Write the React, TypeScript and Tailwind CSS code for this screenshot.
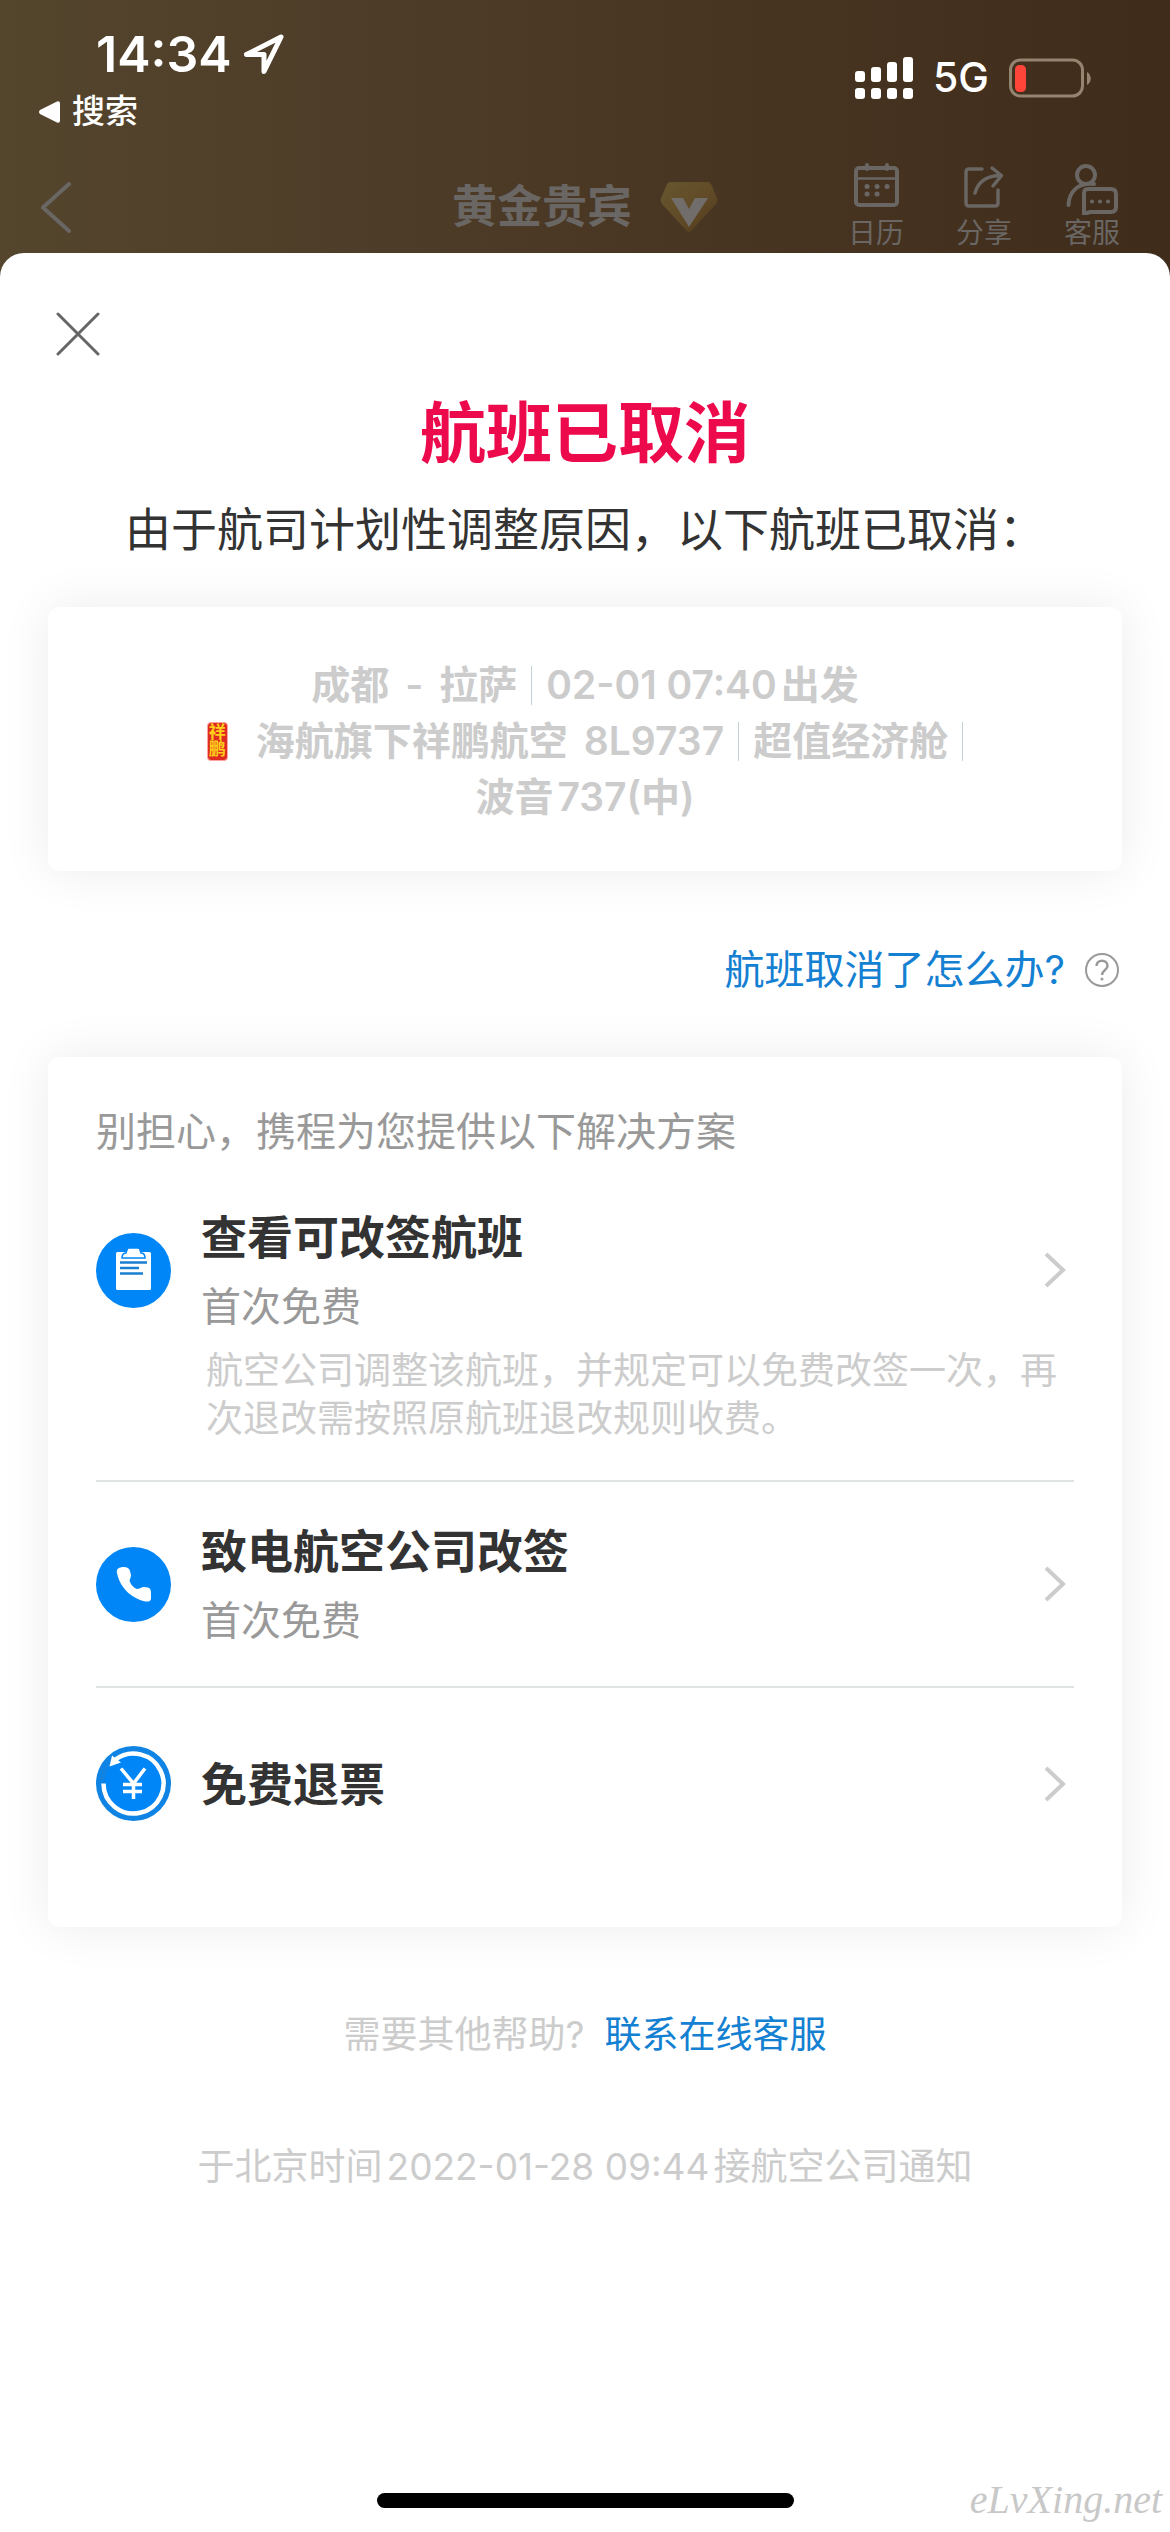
import type { ReactNode } from "react";

function LocationArrow() {
  return (
    <svg className="h-10 w-10" viewBox="0 0 40 40" fill="none" stroke="white" strokeWidth="5" strokeLinejoin="round" aria-hidden="true">
      <path d="M37 3 2.500 20.500H20V37.500Z" />
    </svg>
  );
}

function Signal() {
  const bars = [
    { x: 0, y: 14 },
    { x: 16, y: 10 },
    { x: 32, y: 5 },
    { x: 48, y: 0 },
  ];
  return (
    <svg className="h-[42px] w-[58px]" viewBox="0 0 58 42" fill="white" aria-label="信号">
      {bars.map((b) => (
        <g key={b.x}>
          <rect x={b.x} y={b.y} width="10" height={25 - b.y} rx="3" />
          <rect x={b.x} y="31" width="10" height="11" rx="3" />
        </g>
      ))}
    </svg>
  );
}

function Battery() {
  return (
    <svg className="h-10 w-[82px]" viewBox="0 0 82 40" fill="none" aria-label="电量低">
      <rect x="1.500" y="2" width="72" height="36" rx="10" stroke="#948470" strokeWidth="3" />
      <rect x="6" y="7" width="11" height="27" rx="4.500" fill="#ff453a" />
      <path d="M78 14c5 3 5 10 0 13Z" fill="#948470" />
    </svg>
  );
}

function CalendarIcon() {
  return (
    <svg className="h-[52px] w-[52px]" viewBox="0 0 52 52" fill="none" stroke="currentColor" strokeWidth="4" strokeLinecap="round" aria-hidden="true">
      <rect x="6" y="5" width="41" height="37" rx="3" />
      <path d="M6 15.500h41" strokeWidth="2.500" />
      <path d="M17 2v4M37 2v4" strokeWidth="4" />
      <path d="M17 23.500h.1M27 23.500h.1M37 23.500h.1M17 31h.1M27 31h.1" strokeWidth="5" />
    </svg>
  );
}

function ShareIcon() {
  return (
    <svg className="h-[52px] w-[52px]" viewBox="0 0 52 52" fill="none" stroke="currentColor" strokeWidth="3.500" strokeLinecap="round" strokeLinejoin="round" aria-hidden="true">
      <path d="M24 6H11q-3 0-3 3v31q0 3 3 3h26q3 0 3-3V27" />
      <path d="M17 30C20 19 28 12.500 43 12.500M34 5l9.500 7.500L35 23" />
    </svg>
  );
}

function ServiceIcon() {
  return (
    <svg className="h-[52px] w-[52px]" viewBox="0 0 52 52" fill="none" stroke="currentColor" strokeWidth="4" strokeLinecap="round" strokeLinejoin="round" aria-hidden="true">
      <circle cx="20" cy="12" r="9" />
      <path d="M28 21C12 19 3 29 2.500 42" />
      <path d="M22 26h23q5 0 5 5v13q0 5-5 5H24l-6 2V30q0-4 4-4Z" />
      <path d="M26 38.500h.1M34 38.500h.1M42 38.500h.1" />
    </svg>
  );
}

function VipBadge() {
  return (
    <svg className="h-[52px] w-[58px]" viewBox="0 0 58 52" aria-hidden="true">
      <defs>
        <linearGradient id="badge" x1="0" y1="0" x2="1" y2="1">
          <stop offset="0" stopColor="#65562f" />
          <stop offset="0.5" stopColor="#624c28" />
          <stop offset="1" stopColor="#503819" />
        </linearGradient>
      </defs>
      <path d="M10 1h38q2 0 3 2l6 14q1 3-1 6L32 49q-3 4-6 0L2 23q-2-3-1-6L7 3q1-2 3-2Z" fill="url(#badge)" />
      <path d="M11 17h12l6 11 6-11h13L29 46Z" fill="#716d6b" />
    </svg>
  );
}

function ClipboardIcon() {
  return (
    <svg className="size-[75px] shrink-0" viewBox="0 0 75 75" aria-hidden="true">
      <circle cx="37.500" cy="37.500" r="37.500" fill="#0086f6" />
      <rect x="20" y="19" width="35" height="38" rx="1.500" fill="white" />
      <path d="M31 17q0-2 2-2h9q2 0 2 2l1 3q4 0 4 5H26q0-5 4-5Z" fill="white" stroke="#0086f6" strokeWidth="1.500" />
      <path d="M24 29.500h27M24 35h19M24 40.500h23" stroke="#1a7fd0" strokeWidth="2.500" />
    </svg>
  );
}

function PhoneIcon() {
  return (
    <svg className="size-[75px] shrink-0" viewBox="0 0 75 75" aria-hidden="true">
      <circle cx="37.500" cy="37.500" r="37.500" fill="#0086f6" />
      <path
        d="M28 20C31 20 33 21 34 24L35 28C35 31 33 33 34 35 35 38 38 41 41 42 43 42 46 40 48 40L52 40.500C55 41.500 55 44 55 47V51C55 54 53 55 50 54.500 36 52 24 41 21 26 20 22 23 20 28 20Z"
        fill="white"
      />
    </svg>
  );
}

function RefundIcon() {
  return (
    <svg className="size-[75px] shrink-0" viewBox="0 0 75 75" aria-hidden="true">
      <circle cx="37.500" cy="37.500" r="37.500" fill="#0f84e4" />
      <circle cx="37.500" cy="37.500" r="29" fill="#0086f6" />
      <path d="M7.500 37.500A30 30 0 1 0 19 13.900" fill="none" stroke="white" strokeWidth="4.500" />
      <path d="M16 9.500 13.500 20.500 25 16.500Z" fill="white" />
      <path d="M25 22.500 37.500 37.500 49 22.500M37.500 37.500V53M27 38.500h19M27 45.500h19" fill="none" stroke="white" strokeWidth="3.500" />
    </svg>
  );
}

function Chevron() {
  return (
    <svg className="mr-2 h-9 w-[22px] shrink-0" viewBox="0 0 22 36" fill="none" stroke="#cccccc" strokeWidth="4" aria-hidden="true">
      <path d="M2 2 19 18 2 34" />
    </svg>
  );
}

function AirlineSeal() {
  return (
    <span className="mr-7 flex h-[39px] w-[21px] flex-col items-center justify-center rounded-[4px] border border-red-300 bg-[#dd2c20] text-[17px] leading-[17px] font-bold text-[#ffcf1a]">
      <span>祥</span>
      <span>鹏</span>
    </span>
  );
}

function Bar() {
  return <span className="h-[39px] w-px bg-[#c3d0d6]" />;
}

function NavAction({ icon, label }: { icon: ReactNode; label: string }) {
  return (
    <button type="button" className="flex w-20 flex-col items-center text-[28px] leading-9">
      {icon}
      {label}
    </button>
  );
}

type Option = { icon: ReactNode; title: string; sub?: string; note?: string };

const options: Option[] = [
  {
    icon: <ClipboardIcon />,
    title: "查看可改签航班",
    sub: "首次免费",
    note: "航空公司调整该航班，并规定可以免费改签一次，再次退改需按照原航班退改规则收费。",
  },
  { icon: <PhoneIcon />, title: "致电航空公司改签", sub: "首次免费" },
  { icon: <RefundIcon />, title: "免费退票" },
];

function OptionRow({ icon, title, sub, note }: Option) {
  return (
    <li className="border-b-2 border-[#dfe3e2] last:border-b-0">
      <button type="button" className={sub ? "block w-full py-[37px] text-left" : "block w-full py-[58px] text-left"}>
        <span className="flex items-center gap-[30px]">
          {icon}
          <span className="flex flex-1 flex-col gap-2.5">
            <span className="text-[46px] leading-[64px] font-bold text-[#333333]">{title}</span>
            {sub && <span className="text-[40px] leading-[56px] text-[#999999]">{sub}</span>}
          </span>
          <Chevron />
        </span>
        {note && <span className="mt-3 block pl-[110px] text-[37px] leading-[48px] text-[#cccccc]">{note}</span>}
      </button>
    </li>
  );
}

export default function App() {
  return (
    <div className="flex min-h-screen flex-col bg-linear-to-r from-[#54452d] via-[#4a3825] to-[#3f2c1a] font-[Inter,'Noto_Sans_CJK_SC',sans-serif]">
      <header>
        <div className="flex items-start justify-between pt-6 pr-[79px] text-white">
          <div>
            <div className="flex h-[60px] items-center gap-3 pl-24">
              <span className="text-[50px] font-semibold">14:34</span>
              <LocationArrow />
            </div>
            <a href="#search" className="mt-2 flex h-10 items-center gap-3 pl-[39px] text-[33px] font-medium">
              <svg className="h-[22px] w-[21px]" viewBox="0 0 21 22" fill="white" aria-hidden="true">
                <path d="M1 9 18 .5q3-1 3 2v17q0 3-3 2L1 13q-2-2 0-4Z" />
              </svg>
              搜索
            </a>
          </div>
          <div className="mt-8 flex h-11 items-center gap-5">
            <Signal />
            <span className="text-[41px] font-medium">5G</span>
            <Battery />
          </div>
        </div>
        <nav className="mt-[29px] grid h-[92px] grid-cols-3 items-center text-[#696663]">
          <button type="button" aria-label="返回" className="ml-10 w-8">
            <svg className="h-[52px] w-8" viewBox="0 0 32 52" fill="none" stroke="currentColor" strokeWidth="4" strokeLinecap="round" strokeLinejoin="round">
              <path d="M29 3 3 26.500 29 50" />
            </svg>
          </button>
          <div className="flex items-center justify-center gap-7 text-[45px] font-bold whitespace-nowrap">
            黄金贵宾
            <VipBadge />
          </div>
          <div className="flex justify-end gap-7 pr-[38px]">
            <NavAction icon={<CalendarIcon />} label="日历" />
            <NavAction icon={<ShareIcon />} label="分享" />
            <NavAction icon={<ServiceIcon />} label="客服" />
          </div>
        </nav>
      </header>

      <main className="relative flex flex-1 flex-col rounded-t-3xl bg-white">
        <button type="button" aria-label="关闭" className="mt-[59px] ml-14 w-11">
          <svg className="size-11" viewBox="0 0 44 44" fill="none" stroke="#666666" strokeWidth="3" strokeLinecap="round">
            <path d="M2 2 42 42M42 2 2 42" />
          </svg>
        </button>
        <h1 className="mt-[29px] text-center text-[66px] leading-[96px] font-bold text-[#ec0a4c]">航班已取消</h1>
        <p className="mt-4 text-center text-[46px] leading-[64px] text-[#333333]">由于航司计划性调整原因，以下航班已取消：</p>

        <section className="mx-12 mt-[46px] rounded-xl bg-white pt-[50px] pb-[46px] text-[39px] leading-[56px] font-semibold text-[#cccccc] shadow-[0_0_50px_rgba(0,0,0,0.08)]">
          <div className="flex items-center justify-center gap-3.5">
            <span className="flex gap-4">
              <span>成都</span>
              <span>-</span>
              <span>拉萨</span>
            </span>
            <Bar />
            <span className="flex gap-1">
              <span>02-01 07:40</span>
              <span>出发</span>
            </span>
          </div>
          <div className="flex items-center justify-center gap-3.5">
            <span className="flex items-center">
              <AirlineSeal />
              <span className="mr-4">海航旗下祥鹏航空</span>
              <span>8L9737</span>
            </span>
            <Bar />
            <span>超值经济舱</span>
            <Bar />
          </div>
          <div className="flex justify-center gap-1">
            <span>波音</span>
            <span>737(中)</span>
          </div>
        </section>

        <a href="#help" className="mt-[71px] flex items-center justify-end gap-5 pr-[51px] text-[40px] leading-[56px] text-[#1480d2]">
          航班取消了怎么办?
          <svg className="size-[34px]" viewBox="0 0 34 34" fill="none" stroke="#999999" strokeWidth="2" aria-hidden="true">
            <circle cx="17" cy="17" r="16" />
            <path d="M11.500 13c0-7 11-7 11 0 0 4-5.500 4-5.500 9" strokeWidth="2.500" />
            <circle cx="17" cy="26" r="1.500" fill="#999999" stroke="none" />
          </svg>
        </a>

        <section className="mx-12 mt-[59px] rounded-xl bg-white px-12 pt-[47px] pb-12 shadow-[0_0_50px_rgba(0,0,0,0.08)]">
          <h2 className="text-[40px] leading-[56px] text-[#999999]">别担心，携程为您提供以下解决方案</h2>
          <ul className="mt-2">
            {options.map((o) => (
              <OptionRow key={o.title} {...o} />
            ))}
          </ul>
        </section>

        <p className="mt-20 text-center text-[37px] leading-[56px] text-[#cccccc]">
          需要其他帮助?
          <a href="#service" className="ml-5 text-[#1480d2]">联系在线客服</a>
        </p>
        <p className="mt-[76px] flex justify-center gap-1 text-[37px] leading-[56px] text-[#cccccc]">
          <span>于北京时间</span>
          <span>2022-01-28 09:44</span>
          <span>接航空公司通知</span>
        </p>

        <div className="mx-auto mt-auto mb-6 h-[15px] w-[417px] rounded-full bg-black" />
        <span className="absolute right-2 bottom-2 font-['Liberation_Serif',serif] text-[40px] leading-[48px] text-[#c8c8c8] italic">eLvXing.net</span>
      </main>
    </div>
  );
}
